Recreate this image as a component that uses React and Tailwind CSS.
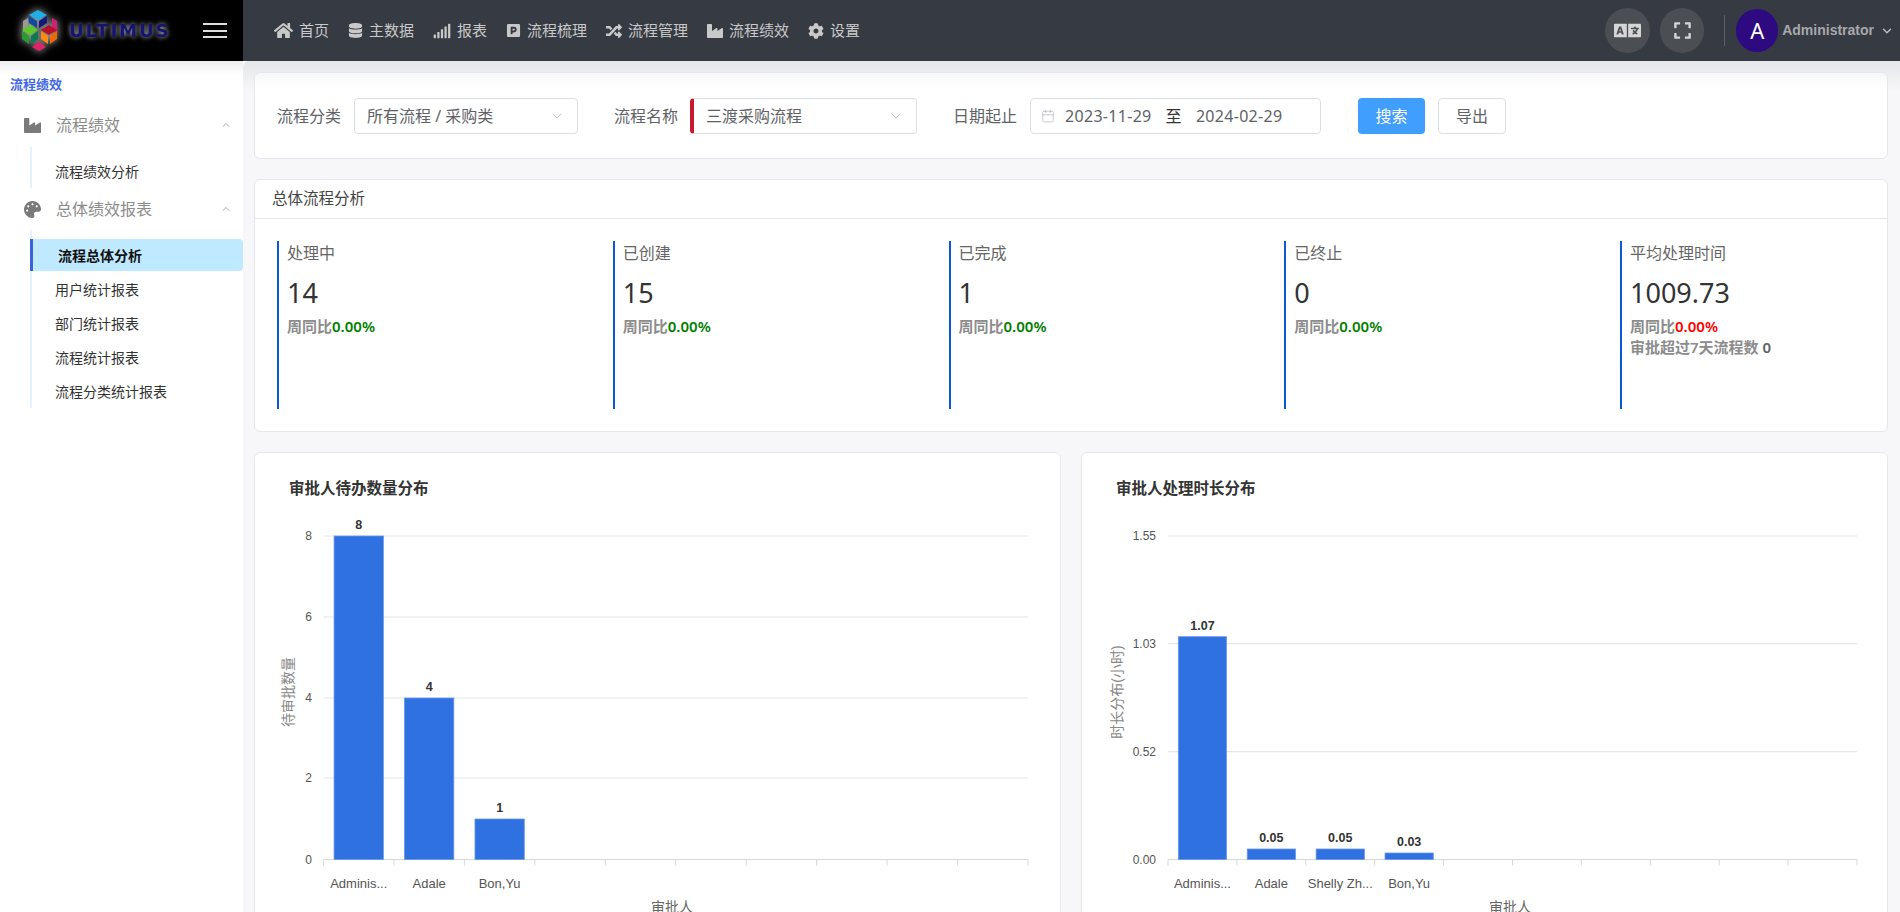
import React from "react";
import { ChevronDown, ChevronUp, Calendar } from "lucide-react";
import {
  FaHome,
  FaDatabase,
  FaSignal,
  FaParking,
  FaRandom,
  FaIndustry,
  FaCog,
  FaPalette,
  FaLanguage,
  FaExpand,
} from "react-icons/fa";

const NAV = [
  { icon: FaHome, size: 19, label: "首页" },
  { icon: FaDatabase, size: 15, label: "主数据" },
  { icon: FaSignal, size: 18, label: "报表" },
  { icon: FaParking, size: 15, label: "流程梳理" },
  { icon: FaRandom, size: 16, label: "流程管理" },
  { icon: FaIndustry, size: 16, label: "流程绩效" },
  { icon: FaCog, size: 16, label: "设置" },
];

const STATS = [
  { title: "处理中", value: "14" },
  { title: "已创建", value: "15" },
  { title: "已完成", value: "1" },
  { title: "已终止", value: "0" },
  { title: "平均处理时间", value: "1009.73", red: true, extra: true },
];

const LEFT_CHART = {
  title: "审批人待办数量分布",
  yTitle: "待审批数量",
  x0: 68.5,
  step: 70.45,
  ticks: [
    { label: "8", y: 36 },
    { label: "6", y: 117 },
    { label: "4", y: 198 },
    { label: "2", y: 278 },
    { label: "0", y: 359.5 },
  ],
  tickRight: 57,
  yTitleX: 33,
  bars: [
    { name: "Adminis...", value: "8", top: 36 },
    { name: "Adale", value: "4", top: 198 },
    { name: "Bon,Yu", value: "1", top: 319 },
  ],
  axisX: 417,
};

const RIGHT_CHART = {
  title: "审批人处理时长分布",
  yTitle: "时长分布(小时)",
  x0: 86,
  step: 68.9,
  ticks: [
    { label: "1.55", y: 36 },
    { label: "1.03", y: 143.7 },
    { label: "0.52", y: 251.7 },
    { label: "0.00", y: 359.5 },
  ],
  tickRight: 74,
  yTitleX: 35,
  bars: [
    { name: "Adminis...", value: "1.07", top: 136.7 },
    { name: "Adale", value: "0.05", top: 349 },
    { name: "Shelly Zh...", value: "0.05", top: 349 },
    { name: "Bon,Yu", value: "0.03", top: 353 },
  ],
  axisX: 428,
};

function Logo() {
  return (
    <div className="flex items-center pl-[20px] w-[180px]">
      <svg width="40" height="44" viewBox="0 0 40 44" className="shrink-0 drop-shadow-[0_0_4px_rgba(255,255,255,0.75)]">
        <polygon points="3,12 8,9 8,21 3,24" fill="#9a9a9a" />
        <polygon points="37,12 32,9 32,21 37,24" fill="#d0207a" />
        <polygon points="18,1 27,6 18,11 9,6" fill="#1eaee8" />
        <polygon points="9,7 17,12 17,19 9,14" fill="#0d4aa0" />
        <polygon points="27,7 19,12 19,19 27,14" fill="#15187a" />
        <polygon points="10,16 18,21 10,26 2,21" fill="#5cc92a" />
        <polygon points="2,22 9,27 9,35 2,30" fill="#2a9a30" />
        <polygon points="18,22 11,27 11,35 18,30" fill="#0c7a50" />
        <polygon points="29,16 37,21 29,26 21,21" fill="#b8102a" />
        <polygon points="21,22 28,27 28,35 21,30" fill="#ff8a10" />
        <polygon points="37,22 30,27 30,35 37,30" fill="#ee6a00" />
        <polygon points="19,33 26,38 19,42 12,38" fill="#e5206a" />
      </svg>
      <span className="ml-[9px] font-['DejaVu_Sans',sans-serif] font-bold text-[18px] tracking-[2px] leading-none text-[#14146e] [text-shadow:0_0_5px_rgba(255,255,255,0.75)]">
        ULTIMUS
      </span>
    </div>
  );
}

function TopBar() {
  return (
    <header className="flex h-[61px] shrink-0 bg-[#363a42]">
      <div className="flex w-[243px] shrink-0 items-center bg-black">
        <Logo />
        <div className="ml-[23px] flex flex-col gap-[4.5px]">
          <span className="block h-[2px] w-[24px] bg-[#dddddd]" />
          <span className="block h-[2px] w-[24px] bg-[#dddddd]" />
          <span className="block h-[2px] w-[24px] bg-[#dddddd]" />
        </div>
      </div>
      <nav className="ml-[31px] flex items-center gap-[19px] text-[15px] text-[#c9c9c9]">
        {NAV.map((item) => (
          <a key={item.label} className="flex items-center gap-[6px]">
            <item.icon size={item.size} />
            <span>{item.label}</span>
          </a>
        ))}
      </nav>
      <div className="ml-auto flex items-center pr-[6px]">
        <button className="flex h-[45px] w-[45px] items-center justify-center rounded-full bg-[#4b4f53] text-[#d6d6d6]">
          <FaLanguage size={27} />
        </button>
        <button className="ml-[10px] flex h-[45px] w-[44px] items-center justify-center rounded-full bg-[#4b4f53] text-[#d6d6d6]">
          <FaExpand size={19} />
        </button>
        <span className="ml-[20px] h-[31px] w-px bg-[#5c6066]" />
        <span className="ml-[11px] flex h-[43px] w-[42px] items-center justify-center rounded-full bg-[#2e0a80] text-[22px] text-white">
          A
        </span>
        <span className="ml-[4px] font-['Liberation_Sans',sans-serif] text-[14px] font-bold text-[#a8a8ac]">
          Administrator
        </span>
        <ChevronDown size={14} strokeWidth={2.5} className="ml-[6px] text-[#bbbbbb]" />
      </div>
    </header>
  );
}

function SideGroup({ icon: Icon, label }) {
  return (
    <div className="flex h-[36px] items-center pl-[24px] pr-[11px] text-[16px] text-[#8c8c8c]">
      <Icon size={17} className="shrink-0 text-[#7a7a7a]" />
      <span className="ml-[15px]">{label}</span>
      <ChevronUp size={12} className="ml-auto text-[#aaaaaa]" />
    </div>
  );
}

function Sidebar() {
  const items = ["用户统计报表", "部门统计报表", "流程统计报表", "流程分类统计报表"];
  return (
    <aside className="w-[243px] shrink-0 bg-white bg-gradient-to-b from-[#eeeef0] to-white to-[14px] pt-[14px]">
      <div className="h-[18px] pl-[10px] text-[13px] font-bold leading-[18px] text-[#4169e1]">流程绩效</div>
      <div className="mt-[14px]">
        <SideGroup icon={FaIndustry} label="流程绩效" />
      </div>
      <ul className="ml-[30px] mt-[4px] border-l-2 border-[#e3f2fd] pt-[8px] text-[14px] text-[#333333]">
        <li className="flex h-[33px] items-center pl-[23px]">流程绩效分析</li>
      </ul>
      <div className="mt-[3px]">
        <SideGroup icon={FaPalette} label="总体绩效报表" />
      </div>
      <ul className="ml-[30px] mt-[3px] border-l-2 border-[#e3f2fd] pt-[9px] text-[14px] text-[#333333]">
        <li className="-ml-[2px] mb-px flex h-[32px] items-center rounded-r-[4px] border-l-[3px] border-[#3b62d8] bg-[#bfe9ff] pl-[25px] font-bold text-[#111111]">
          流程总体分析
        </li>
        {items.map((t) => (
          <li key={t} className="flex h-[34px] items-center pl-[23px]">
            {t}
          </li>
        ))}
      </ul>
    </aside>
  );
}

function SelectBox({ text, width, accent }) {
  return (
    <div
      className={
        "flex h-[36px] items-center justify-between rounded-[4px] border border-[#dcdfe6] bg-white pr-[12px] text-[16px] text-[#606266] " +
        (accent ? "border-l-[4px] border-l-[#c8192e] pl-[12px]" : "pl-[12px]")
      }
      style={{ width }}
    >
      <span>{text}</span>
      <ChevronDown size={16} strokeWidth={1.25} className="text-[#b4b7be]" />
    </div>
  );
}

function FilterCard() {
  return (
    <section className="flex h-[87px] items-center rounded-[6px] border border-[#e6e6ee] bg-white bg-gradient-to-b from-[#f7f7f8] to-white to-[14px] pl-[22px] text-[16px] text-[#606266]">
      <span>流程分类</span>
      <div className="ml-[13px]">
        <SelectBox text="所有流程 / 采购类" width={224} />
      </div>
      <span className="ml-[36px]">流程名称</span>
      <div className="ml-[12px]">
        <SelectBox text="三渡采购流程" width={227} accent />
      </div>
      <span className="ml-[36px]">日期起止</span>
      <div className="ml-[13px] flex h-[36px] w-[291px] items-center rounded-[4px] border border-[#dcdfe6] bg-white pl-[10px] tracking-[0.3px]">
        <Calendar size={14} strokeWidth={1.25} className="text-[#b4b7be]" />
        <span className="ml-[10px]">2023-11-29</span>
        <span className="ml-[14px] text-[#333333]">至</span>
        <span className="ml-[14px]">2024-02-29</span>
      </div>
      <button className="ml-[37px] h-[36px] w-[67px] rounded-[4px] bg-[#409eff] text-white">搜索</button>
      <button className="ml-[13px] h-[36px] w-[68px] rounded-[4px] border border-[#dcdfe6] bg-white">导出</button>
    </section>
  );
}

function StatCol({ stat }) {
  const color = stat.red ? "text-[#ff0000]" : "text-[#008000]";
  return (
    <div className="h-[168px] border-l-2 border-[#0b57d9] pl-[8px]">
      <div className="text-[16px] leading-[24px] text-[#666666]">{stat.title}</div>
      <div className="mt-[10px] text-[27px] leading-[36px] text-[#333333]">{stat.value}</div>
      <div className="mt-[5px] text-[15px] font-semibold leading-[21px] text-[#8c8c8c]">
        周同比<span className={color + " text-[15px]"}>0.00%</span>
      </div>
      {stat.extra && (
        <div className="text-[15px] font-semibold leading-[21px] text-[#8c8c8c]">
          审批超过7天流程数 <span className="text-[#606266]">0</span>
        </div>
      )}
    </div>
  );
}

function SummaryCard() {
  return (
    <section className="mt-[20px] h-[253px] rounded-[6px] border border-[#e6e6ee] bg-white">
      <div className="flex h-[39px] items-center border-b border-[#e4e6f2] pl-[17px] text-[15.5px] text-[#444444]">
        总体流程分析
      </div>
      <div className="grid grid-cols-[repeat(4,335.75px)_1fr] pl-[22px] pt-[22px]">
        {STATS.map((s) => (
          <StatCol key={s.title} stat={s} />
        ))}
      </div>
    </section>
  );
}

function BarChart({ cfg }) {
  const baseline = 359.5;
  const right = cfg.x0 + cfg.step * 10;
  return (
    <svg width="807" height="420" className="block font-['Liberation_Sans','Noto_Sans_CJK_SC',sans-serif]">
      {cfg.ticks.map((t) => (
        <g key={t.label}>
          <line x1={cfg.x0} x2={right} y1={t.y} y2={t.y} stroke={t.y === baseline ? "#d8d8d8" : "#e6e6e6"} strokeWidth="1.2" />
          <text x={cfg.tickRight} y={t.y + 4} fontSize="12" textAnchor="end" fill="#555555">
            {t.label}
          </text>
        </g>
      ))}
      {Array.from({ length: 11 }, (_, i) => (
        <line key={i} x1={cfg.x0 + cfg.step * i} x2={cfg.x0 + cfg.step * i} y1={baseline} y2={baseline + 6} stroke="#d8d8d8" />
      ))}
      {cfg.bars.map((b, i) => {
        const cx = cfg.x0 + cfg.step * (i + 0.5);
        const w = cfg.step * 0.7;
        return (
          <g key={b.name}>
            <rect x={cx - w / 2} y={b.top} width={w} height={baseline - b.top} fill="#2f71e0" stroke="#6a97ea" strokeWidth="0.8" />
            <text x={cx} y={b.top - 7} fontSize="12.5" fontWeight="700" textAnchor="middle" fill="#333333">
              {b.value}
            </text>
            <text x={cx} y={baseline + 28} fontSize="13" textAnchor="middle" fill="#555555">
              {b.name}
            </text>
          </g>
        );
      })}
      <text
        x={cfg.yTitleX}
        y={192}
        fontSize="14"
        textAnchor="middle"
        fill="#888888"
        transform={`rotate(-90 ${cfg.yTitleX} 192)`}
        dominantBaseline="central"
      >
        {cfg.yTitle}
      </text>
      <text x={cfg.axisX} y={412} fontSize="14" textAnchor="middle" fill="#666666">
        审批人
      </text>
    </svg>
  );
}

function ChartCard({ cfg }) {
  return (
    <section className="rounded-[6px] border border-[#e6e6ee] bg-white">
      <h3 className="pl-[34px] pt-[23px] text-[15.5px] font-bold leading-[24px] text-[#333333]">{cfg.title}</h3>
      <BarChart cfg={cfg} />
    </section>
  );
}

export default function App() {
  return (
    <div className="flex h-[912px] flex-col overflow-hidden bg-white font-['Noto_Sans','Noto_Sans_CJK_SC',sans-serif]">
      <TopBar />
      <div className="flex min-h-0 flex-1">
        <Sidebar />
        <main className="min-w-0 flex-1 rounded-tl-[6px] bg-[#f7f7f9] bg-gradient-to-b from-[#e5e6e9] to-[#f7f7f9] to-[30px] pl-[11px] pr-[12px] pt-[11px]">
          <FilterCard />
          <SummaryCard />
          <div className="mt-[20px] grid grid-cols-2 gap-[20px]">
            <ChartCard cfg={LEFT_CHART} />
            <ChartCard cfg={RIGHT_CHART} />
          </div>
        </main>
      </div>
    </div>
  );
}
